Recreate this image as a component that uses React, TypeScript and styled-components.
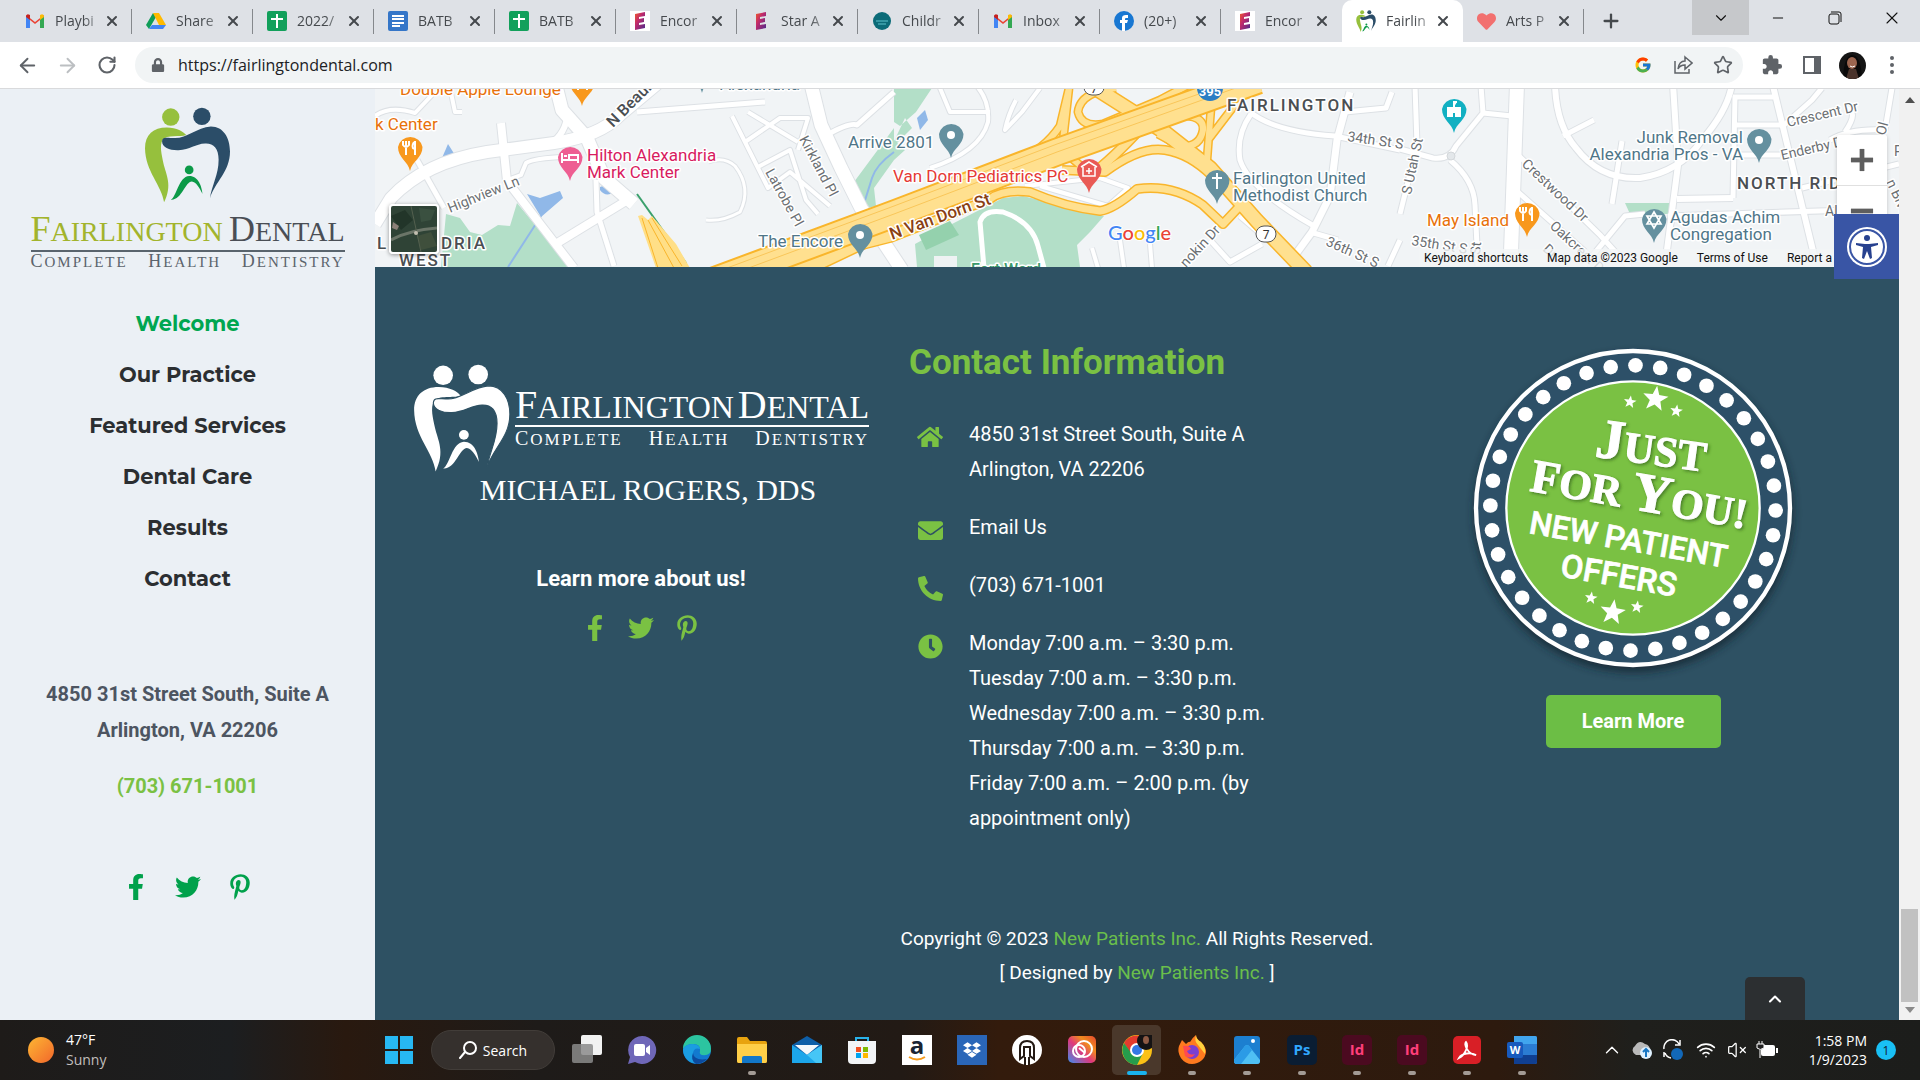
import React from "react";
import styled, { createGlobalStyle } from "styled-components";
import {
  FaFacebookF, FaTwitter, FaPinterestP, FaHome, FaEnvelope, FaPhoneAlt, FaClock, FaLock, FaDropbox, FaHeart,
} from "react-icons/fa";
import { MdExtension } from "react-icons/md";
import { FcGoogle } from "react-icons/fc";
import {
  ArrowLeft, ArrowRight, RotateCw, Star, Plus, X, Minus, ChevronDown, ChevronUp, Wifi, VolumeX, Search,
} from "lucide-react";

const ROBOTO = `Roboto, "Liberation Sans", sans-serif`;
const SYSTEM = `"Open Sans", "Noto Sans", sans-serif`;
const SERIF = `"Liberation Serif", serif`;
const LIME = "#7ac143";
const NAVY = "#2e5163";

const Global = createGlobalStyle`
  * { box-sizing: border-box; }
  body { margin: 0; background: ${NAVY}; font-family: ${ROBOTO}; }
  button, input { font: inherit; border: 0; padding: 0; background: none; color: inherit; }
  a { color: inherit; text-decoration: none; }
  h2, p, ul, address { margin: 0; padding: 0; font-style: normal; list-style: none; }
  svg { display: block; flex: none; }
`;

const Screen = styled.div`
  display: flex; flex-direction: column; height: 100vh; overflow: hidden;
`;

/* ---------- browser chrome ---------- */
const TabStrip = styled.div`
  display: flex; align-items: stretch; height: 42px; flex: none; padding-left: 11px;
  background: #dee1e6; font-family: ${SYSTEM}; color: #45494d;
`;
const Tab = styled.div<{ $active?: boolean; $bare?: boolean }>`
  display: flex; align-items: center; width: 121px; padding: 0 10px 0 14px; position: relative;
  background: ${(p) => (p.$active ? "#fff" : "transparent")};
  border-radius: ${(p) => (p.$active ? "10px 10px 0 0" : "0")};
  &::after {
    content: ""; position: absolute; right: 0; top: 9px; height: 25px; width: 1px;
    background: ${(p) => (p.$active || p.$bare ? "transparent" : "#85888c")};
  }
`;
const TabTitle = styled.button`
  display: flex; align-items: center; gap: 10px; flex: 1; min-width: 0; text-align: left; font-size: 14px; line-height: 20px;
`;
const TabText = styled.span`
  flex: 1; white-space: nowrap;
  mask-image: linear-gradient(90deg, #000 28px, #0004 46px);
`;
const IconButton = styled.button<{ $w?: number }>`
  display: grid; place-items: center; width: ${(p) => p.$w ?? 20}px; flex: none;
`;
const NewTab = styled(IconButton)`margin-left: 7px;`;
const WindowButtons = styled.div`display: flex; margin-left: auto; height: 35px; color: #111;`;
const TabSearch = styled(IconButton)`background: #c6c8cb;`;

const Toolbar = styled.div`
  display: flex; align-items: center; height: 47px; flex: none; padding: 0 8px 0 7px;
  background: #fff; border-bottom: 1px solid #d9dadc; color: #5f6368;
`;
const AddressBar = styled.label`
  display: flex; align-items: center; flex: 1; height: 36px; margin: 0 9px 0 8px; padding-left: 16px; border-radius: 18px; background: #f1f4f5;
`;
const UrlInput = styled.input`
  flex: 1; margin-left: 13px; outline: 0; font: 16px/24px ${SYSTEM}; color: #202124;
`;
const Avatar = styled.span`
  display: block; width: 27px; height: 27px; border-radius: 50%; overflow: hidden; background: #151515;
`;

/* ---------- page ---------- */
const Page = styled.div`display: flex; flex: 1; min-height: 0;`;
const Sidebar = styled.aside`
  width: 375px; flex: none; background: #ebf0f5; display: flex; flex-direction: column; align-items: center; padding-top: 18px;
`;
const Main = styled.main`flex: 1; min-width: 0; display: flex; flex-direction: column; background: ${NAVY}; position: relative;`;

const BrandTitle = styled.div<{ $large?: boolean }>`
  font: ${(p) => (p.$large ? 32 : 28)}px/36px ${SERIF}; white-space: nowrap; color: ${(p) => (p.$large ? "#fff" : "#a2b42c")};
  display: flex; align-items: baseline; justify-content: space-between;
  border-bottom: 2px solid ${(p) => (p.$large ? "#fff" : "#59646d")};
`;
const Cap = styled.span<{ $size: number }>`font-size: ${(p) => p.$size}px;`;
const DarkWord = styled.span<{ $color: string }>`color: ${(p) => p.$color};`;
const BrandTag = styled.div<{ $large?: boolean }>`
  font: ${(p) => (p.$large ? 17 : 15)}px/18px ${SERIF}; white-space: nowrap; color: ${(p) => (p.$large ? "#fff" : "#5b646c")};
  display: flex; align-items: baseline; justify-content: space-between; letter-spacing: 2px; padding-top: ${(p) => (p.$large ? 2 : 0)}px;
`;
const SideBrand = styled.a`display: flex; flex-direction: column; align-items: center; width: 314px;`;
const BrandText = styled.div<{ $gap?: number }>`align-self: stretch; margin-top: ${(p) => p.$gap ?? 0}px; flex: 1;`;

const Nav = styled.nav`display: flex; flex-direction: column; align-items: center; margin-top: 27px;`;
const NavLink = styled.a<{ $active?: boolean }>`
  font: 700 21px/51px Montserrat, Inter, sans-serif; color: ${(p) => (p.$active ? "#00a651" : "#2b2e31")};
`;
const SideAddress = styled.address`
  margin-top: 72px; text-align: center; font: 700 20px/36px ${ROBOTO}; color: #4d5561;
`;
const SidePhone = styled.a`margin-top: 20px; font: 700 20px/36px ${ROBOTO}; color: ${LIME};`;
const Social = styled.div<{ $color: string; $gap: number; $top: number }>`
  display: flex; justify-content: center; gap: ${(p) => p.$gap}px; margin-top: ${(p) => p.$top}px; color: ${(p) => p.$color};
`;

const MapPane = styled.section`position: relative; height: 178px; flex: none; overflow: hidden; background: #f1f4f6;`;
const MapSvg = styled.svg`width: 100%; height: 178px; font-family: ${ROBOTO};`;
const Satellite = styled.button`
  position: absolute; left: 14px; bottom: 13px; border: 2px solid #fff; border-radius: 4px; overflow: hidden; box-shadow: 0 1px 4px #0006;
`;
const ZoomBox = styled.div`
  position: absolute; right: 12px; top: 46px; width: 50px; height: 101px; background: #fff; border-radius: 2px; box-shadow: 0 1px 4px #0003;
  display: flex; flex-direction: column; color: #5e5e5e;
`;
const ZoomButton = styled.button`height: 50px; display: grid; place-items: center; & + & { border-top: 1px solid #e0e0e0; }`;
const Legal = styled.div`
  position: absolute; right: 0; bottom: 0; width: 480px; padding: 0 5px; display: flex; gap: 19px; white-space: nowrap;
  font: 12px/18px ${ROBOTO}; color: #111; background: #f3f5f6cc;
`;
const Accessibility = styled.button`
  position: absolute; right: 0; top: 125px; width: 65px; height: 65px; background: #3955a5; display: grid; place-items: center;
`;
const BackToTop = styled.button`
  position: absolute; right: 94px; bottom: 0; width: 60px; height: 43px; border-radius: 5px 5px 0 0; background: #2c2f31; color: #fff;
  display: grid; place-items: center;
`;

const Columns = styled.div`
  display: grid; grid-template-columns: repeat(3, 1fr); gap: 40px; padding: 73px 38px 0;
`;
const Column = styled.div<{ $center?: boolean }>`
  display: flex; flex-direction: column; align-items: ${(p) => (p.$center ? "center" : "stretch")};
`;
const FooterBrand = styled.div`display: flex; align-items: flex-start; gap: 4px; width: 100%; margin-top: 24px;`;
const Doctor = styled.p`font: 30px/36px ${SERIF}; color: #fff; margin: 0 0 0 14px;`;
const LearnAbout = styled.p`margin-top: 53px; font: 700 22px/36px ${ROBOTO}; color: #fff;`;
const Heading = styled.h2`font: 700 35px/46px ${ROBOTO}; color: ${LIME};`;
const InfoList = styled.ul`margin-top: 31px; display: flex; flex-direction: column; gap: 23px;`;
const InfoRow = styled.li`
  display: grid; grid-template-columns: 44px 1fr; column-gap: 16px; font: 20px/35px ${ROBOTO}; color: #fff;
`;
const InfoIcon = styled.span`color: ${LIME}; display: grid; place-items: center; height: 35px; padding: 5px 2px 0 0;`;
const LearnMore = styled.a`
  margin-top: 15px; width: 175px; border-radius: 5px; background: #6cbe45; color: #fff; text-align: center; font: 700 20px/53px ${ROBOTO};
`;
const Copyright = styled.p`margin-top: 86px; text-align: center; font: 19px/34px ${ROBOTO}; color: #fff;`;
const GreenLink = styled.a`color: #6abf4b;`;

const Scrollbar = styled.div`
  width: 21px; flex: none; background: #f1f1f1; display: flex; flex-direction: column; align-items: center; padding: 8px 0 7px;
`;
const ScrollThumb = styled.div`width: 17px; height: 93px; background: #c1c1c1; margin: auto 0 5px;`;

/* ---------- taskbar ---------- */
const Taskbar = styled.footer`
  display: flex; align-items: center; height: 60px; flex: none; color: #fff; font-family: ${SYSTEM};
  background: linear-gradient(90deg, #1e1b19, #1c1e20 12%, #29190f 18%, #1e1b19 28%, #221a15 47%, #331b0c 52%, #2d1a0e 78%, #1f1f1c 85%, #1c1d1b);
`;
const Weather = styled.button`width: 371px; flex: none; display: flex; align-items: center; gap: 12px; padding-left: 28px; text-align: left; font-size: 14px; line-height: 20px;`;
const Dim = styled.span`color: #c2bfbd;`;
const SearchPill = styled.button`
  width: 124px; height: 40px; margin: 0 4px 0 5px; border-radius: 20px; background: #35302d; border: 1px solid #423d39;
  display: flex; align-items: center; justify-content: center; gap: 6px; font-size: 14px;
`;
const Task = styled.button<{ $focused?: boolean }>`
  width: 55px; height: 60px; position: relative; display: grid; place-items: center; flex: none;
  &::before {
    content: ""; position: absolute; inset: 5px 3px; border-radius: 5px; z-index: 0;
    background: ${(p) => (p.$focused ? "#4a382b" : "transparent")};
  }
  svg { position: relative; }
`;
const Dot = styled.span<{ $wide?: boolean }>`
  position: absolute; bottom: 5px; left: 50%; transform: translateX(-50%); height: 4px; border-radius: 2px;
  width: ${(p) => (p.$wide ? 20 : 8)}px; background: ${(p) => (p.$wide ? "#19b3ee" : "#a39b95")};
`;
const Tray = styled.div`margin-left: auto; display: flex; align-items: center; padding-right: 24px;`;
const Clock = styled.div`width: 84px; text-align: right; font-size: 14px; line-height: 19px;`;
const Notice = styled.span`
  margin-left: 9px; width: 20px; height: 20px; border-radius: 50%; background: #19c0f5; color: #123; display: grid; place-items: center; font-size: 12px;
`;

/* ---------- drawings ---------- */
function ToothMark({ width, white }: { width: number; white?: boolean }) {
  const [a, b, c] = white ? ["#fff", "#fff", "#fff"] : ["#96c03d", "#2b4d68", "#0b9a48"];
  return (
    <svg width={width} viewBox="432 57 260 286">
      <circle cx="512" cy="87" r="26" fill={a} />
      <circle cx="605" cy="85" r="26" fill={b} />
      <path fill={a} d="M435 180C435 140 460 118 500 118C530 118 550 130 558 141C540 148 500 138 487 156C478 175 485 200 490 225C498 260 518 290 492 342C485 290 436 250 435 180Z" />
      <path fill={b} stroke={white ? NAVY : "none"} strokeWidth="3" d="M486 160C487 144 500 150 525 150C560 150 590 118 632 115C670 115 689 150 689 190C689 250 645 280 629 330C635 290 655 260 655 215C655 180 640 165 615 166C585 167 570 185 535 186C510 187 486 178 486 160Z" />
      <circle cx="567" cy="245" r="13" fill={c} />
      <path fill={c} d="M512 334C530 325 535 265 567 263C595 263 605 295 607 317C598 300 588 281 575 280C555 280 545 337 512 334Z" />
    </svg>
  );
}

function BrandWords({ large }: { large?: boolean }) {
  const t = large ? 40 : 36;
  const s = large ? 20 : 18;
  return (
    <>
      <BrandTitle $large={large}>
        <span><Cap $size={t}>F</Cap>AIRLINGTON</span>
        <DarkWord $color={large ? "#fff" : "#4a4e55"}><Cap $size={t}>D</Cap>ENTAL</DarkWord>
      </BrandTitle>
      <BrandTag $large={large}>
        <span><Cap $size={s}>C</Cap>OMPLETE</span>
        <span><Cap $size={s}>H</Cap>EALTH</span>
        <span><Cap $size={s}>D</Cap>ENTISTRY</span>
      </BrandTag>
    </>
  );
}

const star = (cx: number, cy: number, r: number) =>
  Array.from({ length: 10 }, (_, i) => {
    const rad = i % 2 ? r * 0.42 : r;
    const t = (i * 36 - 82) * (Math.PI / 180);
    return `${(cx + rad * Math.cos(t)).toFixed(1)},${(cy + rad * Math.sin(t)).toFixed(1)}`;
  }).join(" ");

const BadgeSvg = styled.svg`overflow: visible;`;
const OfferBadge = () => (
  <BadgeSvg width="340" height="340" viewBox="69 31 1020 1020">
    <defs>
      <filter id="soft" x="-20%" y="-20%" width="140%" height="140%"><feGaussianBlur stdDeviation="12" /></filter>
      <filter id="drop"><feDropShadow dx="5" dy="5" stdDeviation="4" floodColor="#35631c" floodOpacity=".7" /></filter>
    </defs>
    <circle cx="581" cy="550" r="478" fill="#152833" opacity=".8" filter="url(#soft)" />
    <circle cx="579" cy="535" r="471" fill="#2d5068" stroke="#fff" strokeWidth="13" />
    <circle cx="579" cy="535" r="380" fill={LIME} stroke="#fff" strokeWidth="7" />
    {Array.from({ length: 36 }, (_, i) => {
      const t = ((i * 10 - 89) * Math.PI) / 180;
      return <circle key={i} cx={579 + 428 * Math.cos(t)} cy={535 + 428 * Math.sin(t)} r="22" fill="#fff" />;
    })}
    <g fill="#fff">
      <polygon points={star(646, 208, 40)} /><polygon points={star(570, 217, 20)} /><polygon points={star(709, 244, 20)} />
      <polygon points={star(518, 848, 40)} /><polygon points={star(453, 805, 20)} /><polygon points={star(591, 832, 20)} />
      <g fontFamily={SERIF} fontWeight="700" filter="url(#drop)" stroke="#fff" strokeWidth="3">
        <text transform="translate(462 380) rotate(8)" fontSize="128"><tspan fontSize="170">J</tspan>UST</text>
        <text transform="translate(266 483) rotate(10)" fontSize="126"><tspan fontSize="142">F</tspan>OR <tspan fontSize="166">Y</tspan>OU!</text>
      </g>
      <g fontFamily={ROBOTO} fontWeight="500" stroke="#fff" strokeWidth="2">
        <text transform="translate(264 610) rotate(10)" fontSize="95">NEW PATIENT</text>
        <text transform="translate(358 740) rotate(10)" fontSize="98">OFFERS</text>
      </g>
    </g>
  </BadgeSvg>
);

const ROADS: [string, number][] = [
  ["M375 224L391 198Q425 162 487 152L554 143Q600 136 620 115L657 84", 12],
  ["M556 86L562 110L587 138L604 178L634 204", 13],
  ["M568 112Q566 134 550 144", 6],
  ["M501 123L507 181L574 268", 8],
  ["M508 180L521 175L526 163Q534 158 565 157", 4],
  ["M596 180L597 212L614 266", 5],
  ["M554 245L626 201", 8],
  ["M417 160L444 208", 5],
  ["M375 116Q390 105 415 113L432 95M450 88L455 112L462 112", 4],
  ["M637 112L765 102", 5],
  ["M811 84L821 125L841 168L861 208L902 270", 13],
  ["M827 135Q850 122 857 125L894 92", 5],
  ["M732 116L768 188L790 172L830 206M748 112L798 142M745 142L780 118L808 118L798 150M756 168L790 150L806 200L818 214", 4],
  ["M706 220Q722 222 740 212Q752 188 735 166Q724 156 708 162", 3],
  ["M975 84Q990 100 988 122Q980 152 930 168", 4],
  ["M940 88L950 112L990 112M1040 88L1022 112L1005 130Q1008 115 1016 100", 4],
  ["M1025 186L1100 178L1128 188L1108 206L1040 186", 4],
  ["M1350 92L1337 140L1330 196L1312 232L1290 262", 7],
  ["M1251 114Q1236 135 1240 160Q1250 190 1314 226", 5],
  ["M1250 112Q1275 132 1335 136L1400 150", 5],
  ["M1345 112L1386 108L1392 92", 5],
  ["M1240 216L1268 240L1300 260M1210 240L1230 262L1262 244M1310 232L1338 240M1400 240L1388 266", 5],
  ["M1092 248L1098 268M1120 240L1124 268M1150 244L1152 268", 4],
  ["M1517 84L1511 252", 14],
  ["M1415 86L1417 145L1400 214", 5],
  ["M1400 149L1433 158Q1450 160 1456 146L1483 113L1512 116M1481 86L1483 113", 5],
  ["M1450 160Q1474 180 1475 205L1478 266", 5],
  ["M1518 155L1600 235L1630 268M1518 192L1590 256", 5],
  ["M1555 84Q1556 125 1576 148Q1600 180 1640 178Q1680 172 1702 140Q1728 110 1732 84", 6],
  ["M1563 136L1594 120M1622 141L1612 204", 5],
  ["M1673 84L1678 165L1667 250M1677 199L1733 198", 6],
  ["M1735 96L1733 198M1733 97L1773 97M1733 125L1784 125L1812 100L1822 88M1740 155L1780 155", 5],
  ["M1773 86L1814 255", 6],
  ["M1584 266L1625 216L1645 214M1668 216L1850 210", 5],
  ["M1892 88L1885 130Q1850 128 1830 140M1845 132Q1860 110 1845 108M1802 188L1899 164", 5],
];
const HIGHWAYS: [string, number][] = [
  ["M790 268Q840 250 890 238L990 199Q1003 189 1030 192Q1065 207 1100 211Q1114 209 1137 189Q1173 184 1203 205L1223 224L1238 208", 7],
  ["M1070 84L1060 126Q1040 156 1003 164M1069 88L1062 150L1088 172", 6],
  ["M1116 88Q1080 92 1078 112Q1082 128 1103 124L1160 100L1190 84", 6],
  ["M1160 118Q1205 110 1203 130Q1200 148 1180 146L1158 134", 6],
  ["M1211 108L1207 160M1234 106L1208 140", 6],
  ["M1062 170L1105 172Q1140 146 1165 150Q1190 154 1212 176", 7],
  ["M1095 172Q1120 152 1150 118", 8],
  ["M1092 86L1163 131L1210 168L1257 221L1306 272", 13],
  ["M740 266L894 214M800 272L905 222", 12],
];

function Pin({ x, y, fill, children }: { x: number; y: number; fill: string; children?: React.ReactNode }) {
  return (
    <g transform={`translate(${x} ${y})`}>
      <path d="M0 0C-2-10-12-13-12-24A12.500 12.500 0 0 1 12.500-24C12.500-13 2-10 0 0Z" fill={fill} />
      <g transform="translate(0 -23)" fill="none" stroke="#fff" strokeWidth="2">{children ?? <circle r="4" fill="#fff" stroke="none" />}</g>
    </g>
  );
}
const Fork = () => <path d="M-4 7V-1M-7-7V-3Q-4 1-1-3V-7M-4-7V-2M5-7V7M4-6Q1-1 4 1" />;

const Label = ({ x, y, r = 0, c = "#6b6f73", s = 14, w = 400, sp, end, children }: {
  x: number; y: number; r?: number; c?: string; s?: number; w?: number; sp?: number; end?: boolean; children: React.ReactNode;
}) => (
  <text transform={`translate(${x} ${y}) rotate(${r})`} fill={c} fontSize={s} fontWeight={w} letterSpacing={sp}
    textAnchor={end ? "end" : "start"} stroke="#fff" strokeWidth="3" strokeLinejoin="round" paintOrder="stroke">{children}</text>
);

const SLATE = "#4f7688";
const CityMap = () => (
  <MapSvg viewBox="375 89 1524 178" preserveAspectRatio="xMinYMin slice" role="img" aria-label="Map of Fairlington">
    <rect x="375" y="89" width="1524" height="178" fill="#f1f4f6" />
    <g fill="#b3dfc8">
      <path d="M446 214L460 218L470 232L482 235L498 225L510 226L517 203L570 267H441Z" />
      <path d="M894 128L854 182L860 210L876 206L874 188L894 160L905 150L894 140Z" />
      <path d="M894 88H932L916 112L900 126L894 122ZM890 150L912 128L905 118Z" />
      <path d="M1003 198L1023 196L1104 216L1090 232L1077 245L1080 267H917L915 244L950 225Z" />
      <path d="M1625 203H1674L1668 214H1630Z" />
    </g>
    <path d="M919 235L950 221L959 235L926 250Z" fill="#94d1ad" />
    <path d="M934 256H957V267H934Z" fill="#eef2f3" />
    <g fill="#90b8e8">
      <path d="M527 194L540 198L560 191L563 198L541 217Z" /><path d="M442 158L448 144L455 155Z" />
      <path d="M600 187Q610 182 613 193Q605 197 600 190Z" /><path d="M917 118L925 110L928 120L920 130Z" />
    </g>
    <path d="M541 216L508 267M894 152Q876 165 872 178L862 210" fill="none" stroke="#90b8e8" strokeWidth="2" />
    <path d="M984 268L980 222Q984 209 1003 212Q1032 222 1038 246L1044 268" fill="none" stroke="#fff" strokeWidth="5" />
    <g fill="none" strokeLinejoin="round">
      {ROADS.map(([d, w]) => <path key={d} d={d} stroke="#dde1e5" strokeWidth={w + 2} />)}
      {ROADS.map(([d, w]) => <path key={d} d={d} stroke="#fff" strokeWidth={w} />)}
      <path d="M637 194L686 263" stroke="#3aa06c" strokeWidth="2" />
      <path d="M638 216L642 215L648 220L652 216L676 244L690 268H656Z" fill="#ffdf87" stroke="none" />
      <path d="M642 218L658 268M648 220L674 268M652 218L682 266" stroke="#f9b52b" />
      {HIGHWAYS.map(([d, w]) => <path key={d} d={d} stroke="#f9b52b" strokeWidth={w + 3} />)}
      {HIGHWAYS.map(([d, w]) => <path key={d} d={d} stroke="#ffe08f" strokeWidth={w} />)}
      <path d="M700 286L894 214L1057 152L1258 80" stroke="#f9b52b" strokeWidth="29" />
      <path d="M700 286L894 214L1057 152L1258 80" stroke="#ffe08f" strokeWidth="25" />
      <path d="M700 286L894 214L1057 152L1258 80M700 278L894 206L1057 144L1250 76" stroke="#f9c65a" />
    </g>
    <circle cx="1451" cy="156" r="4" fill="#e3e7ea" stroke="#d3d7da" />
    <Label x={400} y={95} s={17} c="#e8710a">Double Apple Lounge</Label>
    <Label x={375} y={130} s={17} c="#e8710a">k Center</Label>
    <Label x={587} y={161} s={17} c="#d81b60">Hilton Alexandria</Label>
    <Label x={587} y={178} s={17} c="#d81b60">Mark Center</Label>
    <Label x={720} y={90} s={17} c={SLATE}>Alexandria</Label>
    <Label x={848} y={148} s={17} c={SLATE}>Arrive 2801</Label>
    <Label x={758} y={247} s={17} c={SLATE}>The Encore</Label>
    <Label x={893} y={182} s={17} c="#e53935">Van Dorn Pediatrics PC</Label>
    <Label x={1233} y={184} s={17} c={SLATE}>Fairlington United</Label>
    <Label x={1233} y={201} s={17} c={SLATE}>Methodist Church</Label>
    <Label x={1743} y={143} s={17} c={SLATE} end>Junk Removal</Label>
    <Label x={1743} y={160} s={17} c={SLATE} end>Alexandria Pros - VA</Label>
    <Label x={1670} y={223} s={17} c={SLATE}>Agudas Achim</Label>
    <Label x={1670} y={240} s={17} c={SLATE}>Congregation</Label>
    <Label x={1427} y={226} s={17} c="#e8710a">May Island</Label>
    <Label x={1227} y={111} s={17} w={500} c="#4a4e52" sp={2}>FAIRLINGTON</Label>
    <Label x={1737} y={189} s={17} w={500} c="#4a4e52" sp={2}>NORTH RID</Label>
    <Label x={377} y={249} s={17} w={500} c="#4a4e52" sp={2}>L</Label>
    <Label x={441} y={249} s={17} w={500} c="#4a4e52" sp={2}>DRIA</Label>
    <Label x={399} y={266} s={17} w={500} c="#4a4e52" sp={2}>WEST</Label>
    <Label x={613} y={128} r={-45} s={16} w={500} c="#4a4e52">N Beauregard</Label>
    <Label x={892} y={240} r={-20} s={17} w={500} c="#8a3f14">N Van Dorn St</Label>
    <Label x={450} y={213} r={-22}>Highview Ln</Label>
    <Label x={799} y={139} r={62}>Kirkland Pl</Label>
    <Label x={765} y={172} r={61}>Latrobe Pl</Label>
    <Label x={1347} y={141} r={8}>34th St S</Label>
    <Label x={1325} y={245} r={24}>36th St S</Label>
    <Label x={1411} y={245} r={9}>35th St S</Label>
    <Label x={1411} y={195} r={-78}>S Utah St</Label>
    <Label x={1480} y={255} r={-85}>St</Label>
    <Label x={1521} y={165} r={43}>Crestwood Dr</Label>
    <Label x={1549} y={227} r={43}>Oakcrest Dr</Label>
    <Label x={1542} y={250} r={43}>Dr</Label>
    <Label x={1788} y={127} r={-13}>Crescent Dr</Label>
    <Label x={1782} y={160} r={-13}>Enderby Dr</Label>
    <Label x={1186} y={268} r={-47}>nokin Dr</Label>
    <Label x={1825} y={216}>Al</Label>
    <Label x={1885} y={136} r={-75}>Ol</Label>
    <Label x={1886} y={182} r={65}>n Blvd</Label>
    <Label x={1894} y={156}>P</Label>
    <Label x={971} y={275} s={16} w={500} c="#3b9a6b">Fort Ward</Label>
    <Pin x={410} y={171} fill="#f8981d"><Fork /></Pin>
    <Pin x={582} y={106} fill="#f8981d"><Fork /></Pin>
    <Pin x={1527} y={237} fill="#f8981d"><Fork /></Pin>
    <Pin x={570} y={181} fill="#ee5e92"><path d="M-8-5V5M-8 2H8V5M8 2V-3H-1V1M-6-2H-3" /></Pin>
    <Pin x={702} y={93} fill="#64909f" />
    <Pin x={951} y={158} fill="#64909f" />
    <Pin x={860} y={258} fill="#64909f" />
    <Pin x={1759} y={163} fill="#64909f" />
    <Pin x={1089} y={193} fill="#e95a55"><path d="M-6-3V6H6V-3M-8-3L0-8L8-3M0-2V4M-3 1H3" strokeWidth="1.500" /></Pin>
    <Pin x={1217} y={204} fill="#64909f"><path d="M0-8V8M-5-3H5" /></Pin>
    <Pin x={1654} y={243} fill="#64909f"><path d="M0-8L7 4H-7ZM0 8L7-4H-7Z" strokeWidth="1.700" /></Pin>
    <Pin x={1454} y={133} fill="#12b0c2"><path d="M-6 6V-2H6V6H2V2H-2V6ZM0-3V-8H3" fill="#fff" /></Pin>
    <circle cx="1210" cy="88" r="13" fill="#2a7dc4" /><text x="1210" y="96" textAnchor="middle" fontSize="13" fontWeight="700" fill="#fff">395</text>
    <rect x="1256" y="226" width="20" height="16" rx="8" fill="#fff" stroke="#555" /><text x="1266" y="239" textAnchor="middle" fontSize="12" fill="#333">7</text>
    <rect x="1084" y="80" width="20" height="15" rx="8" fill="#fff" stroke="#555" /><text x="1094" y="93" textAnchor="middle" fontSize="12" fill="#333">7</text>
    <text x="1108" y="240" fontSize="20" fontWeight="500" fontFamily="Lato, sans-serif" stroke="#fff" strokeWidth="2" paintOrder="stroke">
      <tspan fill="#4285f4">G</tspan><tspan fill="#ea4335">o</tspan><tspan fill="#fbbc05">o</tspan><tspan fill="#4285f4">g</tspan><tspan fill="#34a853">l</tspan><tspan fill="#ea4335">e</tspan>
    </text>
  </MapSvg>
);

/* favicons, drawn on a 20-unit grid */
const Gmail = () => (
  <svg width="20" viewBox="0 0 20 20">
    <path d="M1 4V17H5V9L10 13L15 9V17H19V4L10 11Z" fill="#ea4335" /><path d="M1 5V17H5V8Z" fill="#4285f4" />
    <path d="M15 8V17H19V5Z" fill="#34a853" /><path d="M15 4Q19 2 19 6L15 9Z" fill="#fbbc04" /><path d="M5 4Q1 2 1 6L5 9Z" fill="#c5221f" />
  </svg>
);
const Drive = () => (
  <svg width="20" viewBox="0 0 20 20">
    <path d="M7 2L0 14L3 18L10 6Z" fill="#0f9d58" /><path d="M7 2H13L20 14H13Z" fill="#ffba00" /><path d="M6 14H20L17 18H3Z" fill="#4285f4" />
  </svg>
);
const Sheets = () => <svg width="20" viewBox="0 0 20 20"><rect width="20" height="20" rx="2" fill="#12a05b" /><path d="M10 3V17M4 8H16" stroke="#fff" strokeWidth="2" /></svg>;
const Docs = () => <svg width="20" viewBox="0 0 20 20"><rect width="20" height="20" rx="2" fill="#3576c8" /><path d="M4 5H16M4 8H16M4 12H16M4 15H12" stroke="#fff" strokeWidth="2" /></svg>;
const EncoreIcon = ({ bg = "none" }: { bg?: string }) => (
  <svg width="20" viewBox="0 0 20 20">
    <defs><linearGradient id="enc" x1="0" y1="0" x2="1" y2="1"><stop stopColor="#f05a28" /><stop offset=".4" stopColor="#c02a6c" /><stop offset="1" stopColor="#4b2a8c" /></linearGradient></defs>
    <rect width="20" height="20" fill={bg} /><path d="M5 3L15 1V5L9 6V8L14 7V11L9 12V14L15 13V17L5 19Z" fill="url(#enc)" />
  </svg>
);
const Teal = () => <svg width="20" viewBox="0 0 20 20"><circle cx="10" cy="10" r="9" fill="#0b6b78" /><path d="M4 10H16M6 13H14" stroke="#5fc4cd" /></svg>;
const Facebook = () => <svg width="20" viewBox="0 0 20 20"><circle cx="10" cy="10" r="10" fill="#1877d2" /><path d="M8 20V12H6V9H8V7Q8 4 12 4H14V7H12Q11 7 11 8V9H14L13 12H11V20Z" fill="#fff" /></svg>;

const TABS: { icon: React.ReactNode; text: string; active?: boolean; bare?: boolean }[] = [
  { icon: <Gmail />, text: "Playbi" },
  { icon: <Drive />, text: "Share" },
  { icon: <Sheets />, text: "2022/" },
  { icon: <Docs />, text: "BATB" },
  { icon: <Sheets />, text: "BATB" },
  { icon: <EncoreIcon bg="#fff" />, text: "Encor" },
  { icon: <EncoreIcon />, text: "Star A" },
  { icon: <Teal />, text: "Childr" },
  { icon: <Gmail />, text: "Inbox" },
  { icon: <Facebook />, text: "(20+)" },
  { icon: <EncoreIcon bg="#fff" />, text: "Encor", bare: true },
  { icon: <ToothMark width={20} />, text: "Fairlin", active: true },
  { icon: <FaHeart size={19} color="#f2706f" />, text: "Arts P" },
];

/* taskbar icons, drawn on a 30-unit grid */
const Tile = ({ children }: { children: React.ReactNode }) => <svg width="30" height="30" viewBox="0 0 30 30">{children}</svg>;
const Adobe = ({ bg, fg, text }: { bg: string; fg: string; text: string }) => (
  <Tile><rect width="30" height="30" rx="5" fill={bg} /><text x="15" y="20" textAnchor="middle" fontSize="15" fontWeight="700" fill={fg}>{text}</text></Tile>
);
const TASKS: { name: string; icon: React.ReactNode; run?: boolean; focused?: boolean }[] = [
  { name: "Task view", icon: <Tile><rect x="9" y="0" width="21" height="20" rx="2" fill="#f2f2f2" /><rect y="9" width="21" height="19" rx="2" fill="#8b8b8b" opacity=".85" /></Tile> },
  { name: "Chat", icon: <Tile><path d="M15 1A14 14 0 1 1 8 27L1 29L3 22A14 14 0 0 1 15 1Z" fill="#6f67b8" /><rect x="7" y="9" width="11" height="12" rx="2" fill="#fff" /><path d="M19 13L23 10V20L19 17Z" fill="#fff" /></Tile> },
  { name: "Edge", icon: <Tile><circle cx="15" cy="15" r="14" fill="#1279cf" /><path d="M1 14A14 14 0 0 1 29 14Q29 21 20 20Q17 19 18 16Q19 9 11 9Q4 9 1 14Z" fill="#2cc4a0" /><path d="M1 14Q4 9 11 9Q18 10 18 14Q12 12 11 18Q11 26 19 28A14 14 0 0 1 1 14Z" fill="#1b9de2" /><path d="M11 18Q12 26 25 24Q20 29 14 29Q8 25 11 18Z" fill="#0c4a9e" /></Tile> },
  { name: "Explorer", run: true, icon: <Tile><path d="M0 4Q0 2 2 2H10L13 6H28Q30 6 30 8V26Q30 28 28 28H2Q0 28 0 26Z" fill="#e8a30f" /><path d="M0 9H30V26Q30 28 28 28H2Q0 28 0 26Z" fill="#ffcf48" /><path d="M5 28V23Q5 21 7 21H23Q25 21 25 23V28Z" fill="#1277c8" /></Tile> },
  { name: "Mail", icon: <Tile><path d="M0 10L15 1L30 10V28H0Z" fill="#0e5fa8" /><path d="M3 10H27L15 20Z" fill="#f4f8fb" /><path d="M0 10L15 20L30 10V28H0Z" fill="#1ca6ea" /><path d="M15 20L30 10V28H24Z" fill="#46c6f6" /></Tile> },
  { name: "Store", icon: <Tile><path d="M9 7V3H21V7" fill="none" stroke="#29b2ea" strokeWidth="2" /><path d="M1 6H29V25Q29 29 25 29H5Q1 29 1 25Z" fill="#f2f4f6" /><path d="M9 12H14V17H9Z" fill="#f25022" /><path d="M16 12H21V17H16Z" fill="#7fba00" /><path d="M9 18H14V23H9Z" fill="#00a4ef" /><path d="M16 18H21V23H16Z" fill="#ffb900" /></Tile> },
  { name: "Amazon", icon: <Tile><rect width="30" height="30" fill="#fff" /><text x="15" y="19" textAnchor="middle" fontSize="24" fontWeight="700" fill="#1a2433">a</text><path d="M7 22Q15 27 23 22" fill="none" stroke="#f59a1b" strokeWidth="2" /></Tile> },
  { name: "Dropbox", icon: <Tile><rect width="30" height="30" fill="#2a66b8" /><g transform="translate(6 6)"><FaDropbox size={18} color="#fff" /></g></Tile> },
  { name: "Arch", icon: <Tile><circle cx="15" cy="15" r="15" fill="#fff" /><path d="M8 24V13Q8 6 15 6Q22 6 22 13V24L18 21V12H12V21Z" fill="#fff" stroke="#241a14" strokeWidth="2" /><path d="M12 22H18V30H12Z" fill="#241a14" /><path d="M14 22H16V30H14Z" fill="#fff" /></Tile> },
  { name: "Creative Cloud", icon: <Tile><defs><linearGradient id="cc" x1="1" y1="0" x2="0" y2="1"><stop stopColor="#e7472f" /><stop offset=".3" stopColor="#f08c1e" /><stop offset=".55" stopColor="#e0387c" /><stop offset="1" stopColor="#3b8df0" /></linearGradient></defs><rect x="1" y="1" width="28" height="27" rx="5" fill="url(#cc)" /><circle cx="12" cy="16" r="6" fill="none" stroke="#fff" strokeWidth="2" /><circle cx="17" cy="14" r="8" fill="none" stroke="#fff" strokeWidth="2" /><path d="M12 13L18 18" stroke="#fff" strokeWidth="2" /></Tile> },
  { name: "Chrome", run: true, focused: true, icon: <Tile><circle cx="15" cy="15" r="15" fill="#fbc116" /><path d="M2 8A15 15 0 0 1 28 8H15L9 19Z" fill="#e33b2e" /><path d="M2 8A15 15 0 0 0 15 30L21 18L10 19Z" fill="#269c4c" /><circle cx="15" cy="15" r="7" fill="#fff" /><circle cx="15" cy="15" r="5" fill="#3478e5" /><circle cx="24" cy="6" r="9" fill="#151314" /><ellipse cx="24" cy="5" rx="3" ry="4" fill="#8e5a44" /></Tile> },
  { name: "Firefox", run: true, icon: <Tile><path d="M15 29A14 14 0 0 1 2 11L5 5L9 9Q12 6 13 7Q15 3 19 0Q19 4 24 7Q29 12 29 17A14 13 0 0 1 15 29Z" fill="#ff7a1f" /><path d="M19 0Q19 4 24 7Q29 12 28 19L21 10Q17 6 19 0Z" fill="#ffd23e" /><circle cx="15" cy="17" r="7" fill="#7b3fd0" /><path d="M6 11Q12 10 14 14L10 16Q12 21 18 19Q14 25 8 21Z" fill="#ff4a4f" /></Tile> },
  { name: "Photos", run: true, icon: <Tile><rect x="2" y="1" width="26" height="28" rx="3" fill="#1c7fd0" /><path d="M2 25L13 11Q15 9 17 11L28 25V26Q28 29 25 29H5Q2 29 2 26Z" fill="#4fc0f4" /><path d="M2 25L13 11Q15 9 17 11L20 15L9 29H5Q2 29 2 26Z" fill="#2b9be6" /><circle cx="21" cy="6" r="2" fill="#fff" /></Tile> },
  { name: "Photoshop", run: true, icon: <Adobe bg="#0a1d33" fg="#31a8ff" text="Ps" /> },
  { name: "InDesign", run: true, icon: <Adobe bg="#4b0a20" fg="#ff3f7b" text="Id" /> },
  { name: "InDesign 2023", run: true, icon: <Adobe bg="#4b0a20" fg="#ff3f7b" text="Id" /> },
  { name: "Acrobat", run: true, icon: <Tile><rect x="1" y="1" width="28" height="28" rx="5" fill="#d81f26" /><path d="M7 23C13 20 17 11 14 7C12 9 15 19 24 20C19 17 10 18 7 23Z" fill="none" stroke="#fff" strokeWidth="1.800" /></Tile> },
  { name: "Word", run: true, icon: <Tile><rect x="7" y="1" width="23" height="28" rx="2" fill="#2b7cd3" /><path d="M7 1H28Q30 1 30 3V9H7Z" fill="#41a5ee" /><path d="M7 20H30V27Q30 29 28 29H7Z" fill="#103f91" /><rect y="7" width="16" height="16" rx="2" fill="#185abd" /><text x="8" y="19" textAnchor="middle" fontSize="11" fontWeight="700" fill="#fff">W</text></Tile> },
];

const NAV = ["Welcome", "Our Practice", "Featured Services", "Dental Care", "Results", "Contact"];

const Socials = ({ color, gap, top }: { color: string; gap: number; top: number }) => (
  <Social $color={color} $gap={gap} $top={top}>
    <a href="#facebook" aria-label="Facebook"><FaFacebookF size={26} /></a>
    <a href="#twitter" aria-label="Twitter"><FaTwitter size={26} /></a>
    <a href="#pinterest" aria-label="Pinterest"><FaPinterestP size={26} /></a>
  </Social>
);

export default function App() {
  return (
    <Screen>
      <Global />
      <TabStrip>
        {TABS.map((t, i) => (
          <Tab key={i} $active={t.active} $bare={t.bare}>
            <TabTitle>{t.icon}<TabText>{t.text}</TabText></TabTitle>
            <IconButton aria-label="Close tab"><X size={16} strokeWidth={3} /></IconButton>
          </Tab>
        ))}
        <NewTab $w={40} aria-label="New tab"><Plus size={22} strokeWidth={2.5} /></NewTab>
        <WindowButtons>
          <TabSearch $w={57} aria-label="Search tabs"><ChevronDown size={18} strokeWidth={1.5} /></TabSearch>
          <IconButton $w={57} aria-label="Minimize"><Minus size={16} strokeWidth={1.5} /></IconButton>
          <IconButton $w={57} aria-label="Restore">
            <svg width="14" height="14" viewBox="0 0 14 14" fill="none" stroke="#111"><rect x="1" y="3" width="10" height="10" rx="2" /><path d="M3 1H11Q13 1 13 3V11" /></svg>
          </IconButton>
          <IconButton $w={57} aria-label="Close"><X size={20} strokeWidth={1.3} /></IconButton>
        </WindowButtons>
      </TabStrip>
      <Toolbar>
        <IconButton $w={40} aria-label="Back"><ArrowLeft size={23} /></IconButton>
        <IconButton $w={40} aria-label="Forward"><ArrowRight size={23} color="#bcbfc2" /></IconButton>
        <IconButton $w={40} aria-label="Reload"><RotateCw size={20} strokeWidth={2.5} /></IconButton>
        <AddressBar>
          <FaLock size={14} />
          <UrlInput aria-label="Address" defaultValue="https://fairlingtondental.com" />
          <IconButton $w={40} aria-label="Google"><FcGoogle size={18} /></IconButton>
          <IconButton $w={40} aria-label="Share">
            <svg width="20" height="20" viewBox="0 0 20 20" fill="none" stroke="#5f6368" strokeWidth="1.500"><path d="M2 6V18H16V14M12 2L19 8L12 14V10Q7 10 5 14Q6 6 12 6Z" /></svg>
          </IconButton>
          <IconButton $w={40} aria-label="Bookmark"><Star size={20} /></IconButton>
        </AddressBar>
        <IconButton $w={40} aria-label="Extensions"><MdExtension size={22} /></IconButton>
        <IconButton $w={40} aria-label="Side panel">
          <svg width="18" height="18" viewBox="0 0 18 18"><rect x="1" y="1" width="16" height="16" fill="none" stroke="#5f6368" strokeWidth="2" /><path d="M11 1H17V17H11Z" fill="#5f6368" /></svg>
        </IconButton>
        <IconButton $w={40} aria-label="Profile">
          <Avatar><svg width="27" height="27" viewBox="0 0 27 27"><path d="M4 27Q5 3 13 3Q22 3 23 27Z" fill="#090909" /><ellipse cx="13" cy="11" rx="5" ry="6" fill="#9c6650" /><path d="M11 14Q13 16 16 14" stroke="#fff" fill="none" /><path d="M10 17H17L20 27H7Z" fill="#4a332b" /></svg></Avatar>
        </IconButton>
        <IconButton $w={40} aria-label="Menu">
          <svg width="6" height="22" viewBox="0 0 6 22" fill="#5f6368"><circle cx="3" cy="4" r="2" /><circle cx="3" cy="11" r="2" /><circle cx="3" cy="18" r="2" /></svg>
        </IconButton>
      </Toolbar>

      <Page>
        <Sidebar>
          <SideBrand href="#home">
            <ToothMark width={87} />
            <BrandText $gap={8}><BrandWords /></BrandText>
          </SideBrand>
          <Nav>{NAV.map((n, i) => <NavLink key={n} href="#nav" $active={i === 0}>{n}</NavLink>)}</Nav>
          <SideAddress>4850 31st Street South, Suite A<br />Arlington, VA 22206</SideAddress>
          <SidePhone href="tel:7036711001">(703) 671-1001</SidePhone>
          <Socials color="#00a14b" gap={26} top={70} />
        </Sidebar>

        <Main>
          <MapPane>
            <CityMap />
            <Satellite aria-label="Satellite view">
              <svg width="46" height="46" viewBox="0 0 46 46">
                <rect width="46" height="46" fill="#2f4336" /><path d="M0 34Q18 24 46 22" stroke="#6b7568" strokeWidth="3" fill="none" />
                <path d="M0 10L14 4L22 14L10 24Z" fill="#223529" /><path d="M26 30L40 26L46 40L30 44Z" fill="#3f4f3c" /><path d="M28 2L44 4L40 14L30 16Z" fill="#3a5040" />
                <path d="M2 16L8 20L6 24L1 22Z" fill="#8b8078" /><path d="M20 0L30 46" stroke="#54604f" /><circle cx="25" cy="27" r="2" fill="#c3bfb0" />
              </svg>
            </Satellite>
            <ZoomBox>
              <ZoomButton aria-label="Zoom in"><Plus size={38} strokeWidth={3} strokeLinecap="butt" /></ZoomButton>
              <ZoomButton aria-label="Zoom out"><Minus size={38} strokeWidth={3} strokeLinecap="butt" /></ZoomButton>
            </ZoomBox>
            <Legal>
              <button>Keyboard shortcuts</button><span>Map data ©2023 Google</span><a href="#terms">Terms of Use</a><a href="#report">Report a</a>
            </Legal>
          </MapPane>
          <Accessibility aria-label="Accessibility">
            <svg width="42" height="42" viewBox="0 0 42 42">
              <circle cx="21" cy="21" r="20" fill="#fff" /><circle cx="21" cy="21" r="17" fill="#fff" stroke="#3955a5" strokeWidth="2" />
              <circle cx="21" cy="12" r="3" fill="#27418f" /><path d="M10 17L19 18H23L32 17V19L25 21L26 32L24 33L21 25L18 33L16 32L17 21L10 19Z" fill="#27418f" />
            </svg>
          </Accessibility>

          <Columns>
            <Column $center>
              <FooterBrand>
                <ToothMark width={98} white />
                <BrandText $gap={23}><BrandWords large /></BrandText>
              </FooterBrand>
              <Doctor>MICHAEL ROGERS, DDS</Doctor>
              <LearnAbout>Learn more about us!</LearnAbout>
              <Socials color={LIME} gap={20} top={18} />
            </Column>
            <Column>
              <Heading>Contact Information</Heading>
              <InfoList>
                <InfoRow><InfoIcon><FaHome size={26} /></InfoIcon><address>4850 31st Street South, Suite A<br />Arlington, VA 22206</address></InfoRow>
                <InfoRow><InfoIcon><FaEnvelope size={25} /></InfoIcon><a href="mailto:office">Email Us</a></InfoRow>
                <InfoRow><InfoIcon><FaPhoneAlt size={25} /></InfoIcon><a href="tel:7036711001">(703) 671-1001</a></InfoRow>
                <InfoRow>
                  <InfoIcon><FaClock size={25} /></InfoIcon>
                  <div>
                    <p>Monday 7:00 a.m. – 3:30 p.m.</p><p>Tuesday 7:00 a.m. – 3:30 p.m.</p><p>Wednesday 7:00 a.m. – 3:30 p.m.</p>
                    <p>Thursday 7:00 a.m. – 3:30 p.m.</p><p>Friday 7:00 a.m. – 2:00 p.m. (by appointment only)</p>
                  </div>
                </InfoRow>
              </InfoList>
            </Column>
            <Column $center>
              <OfferBadge />
              <LearnMore href="#offers">Learn More</LearnMore>
            </Column>
          </Columns>
          <Copyright>
            Copyright © 2023 <GreenLink href="#npi">New Patients Inc.</GreenLink> All Rights Reserved.<br />
            [ Designed by <GreenLink href="#npi">New Patients Inc.</GreenLink> ]
          </Copyright>
          <BackToTop aria-label="Back to top"><ChevronUp size={20} strokeWidth={2.5} /></BackToTop>
        </Main>
        <Scrollbar>
          <svg width="10" height="6" viewBox="0 0 10 6"><path d="M0 6L5 0L10 6Z" fill="#505050" /></svg>
          <ScrollThumb />
          <svg width="10" height="6" viewBox="0 0 10 6"><path d="M0 0L5 6L10 0Z" fill="#8a8a8a" /></svg>
        </Scrollbar>
      </Page>

      <Taskbar>
        <Weather>
          <svg width="26" height="26" viewBox="0 0 26 26"><defs><linearGradient id="sun" x1="0" y1="0" x2="1" y2="1"><stop stopColor="#fdb733" /><stop offset="1" stopColor="#f2672b" /></linearGradient></defs><circle cx="13" cy="13" r="13" fill="url(#sun)" /></svg>
          <span>47°F<br /><Dim>Sunny</Dim></span>
        </Weather>
        <Task aria-label="Start"><Tile><path d="M1 1H14V14H1ZM16 1H29V14H16ZM1 16H14V29H1ZM16 16H29V29H16Z" fill="#27b8f3" /></Tile></Task>
        <SearchPill>
          <svg width="18" height="18" viewBox="0 0 18 18" fill="none" stroke="#fff" strokeWidth="2" strokeLinecap="round"><circle cx="11" cy="7" r="6" /><path d="M6 11L1 17" /></svg>
          Search
        </SearchPill>
        {TASKS.map((t) => <Task key={t.name} aria-label={t.name} $focused={t.focused}>{t.icon}{t.run && <Dot $wide={t.focused} />}</Task>)}
        <Tray>
          <IconButton $w={30} aria-label="Hidden icons"><ChevronUp size={22} strokeWidth={1.5} /></IconButton>
          <IconButton $w={30} aria-label="OneDrive"><svg width="22" height="18" viewBox="0 0 22 18"><path d="M5 14A5 5 0 0 1 4 5Q8-2 14 3Q20 4 19 12L17 14Z" fill="#b9b9b9" /><circle cx="15" cy="12" r="6" fill="#dff1ff" /><path d="M15 8V16M12 11L15 8L18 11" stroke="#1977c4" strokeWidth="2" fill="none" /></svg></IconButton>
          <IconButton $w={32} aria-label="Sync"><svg width="22" height="22" viewBox="0 0 22 22"><path d="M2 10A8 8 0 0 1 17 5M18 1V6H13M3 14A8 8 0 0 0 9 19M2 18V13" stroke="#fff" strokeWidth="1.500" fill="none" /><circle cx="15" cy="15" r="6" fill="#1268b8" /></svg></IconButton>
          <IconButton $w={34} aria-label="Network"><Wifi size={20} /></IconButton>
          <IconButton $w={28} aria-label="Volume"><VolumeX size={20} strokeWidth={1.5} /></IconButton>
          <IconButton $w={32} aria-label="Battery"><svg width="22" height="18" viewBox="0 0 22 18"><rect x="5" y="4" width="14" height="11" rx="2" fill="#fff" /><rect x="20" y="7" width="2" height="5" fill="#fff" /><path d="M1 3H8V7Q4 10 1 7ZM3 0V3M6 0V3M4 9V17" stroke="#fff" fill="#222" /></svg></IconButton>
          <Clock>1:58 PM<br />1/9/2023</Clock>
          <Notice>1</Notice>
        </Tray>
      </Taskbar>
    </Screen>
  );
}
